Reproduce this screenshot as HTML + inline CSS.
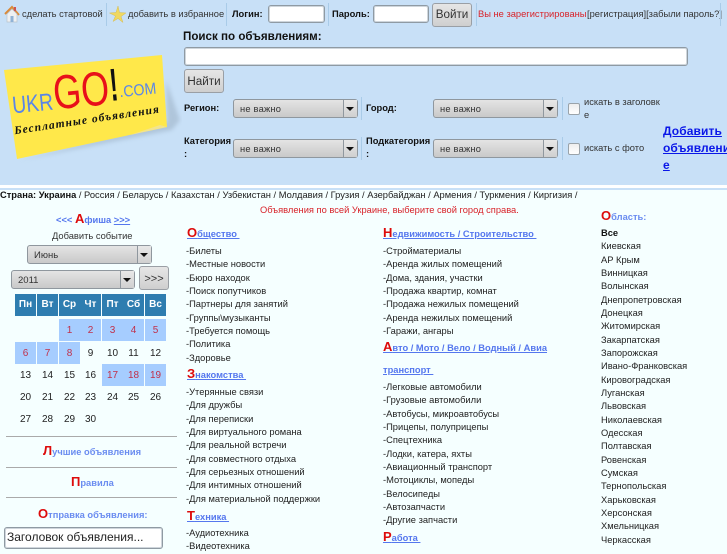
<!DOCTYPE html>
<html lang="ru"><head><meta charset="utf-8"><title>ukrGO</title>
<style>
html,body{margin:0;padding:0}
body{width:727px;height:545px;overflow:hidden;position:relative;background:#f5ffff;font:9.33px/13.33px "Liberation Sans","DejaVu Sans",sans-serif;color:#222}
.a{position:absolute;white-space:nowrap}
#top{position:absolute;left:0;top:0;width:727px;height:185px;background:#c8e0f7}
#l1{position:absolute;left:0;top:185px;width:727px;height:3px;background:#fff}
#l2{position:absolute;left:0;top:188px;width:727px;height:2px;background:#c8e0f7}
.sep{position:absolute;width:1px;background:#a9cbe8}
.inp{position:absolute;box-sizing:border-box;background:#fff;border:1px solid #8f9aa3;border-radius:3px;box-shadow:inset 0 0 0 1px #cfd6dc}
.btn{position:absolute;box-sizing:border-box;background:linear-gradient(#e6e6e6,#cfcfcf);border:1px solid #9a9fa5;border-radius:3px;text-align:center;color:#333;font-size:11.67px}
.sel{position:absolute;box-sizing:border-box;height:19px;background:linear-gradient(#e4e4e4,#c9c9c9);border:1px solid #8f979e;border-radius:3px;color:#333;font-size:9.33px;line-height:19px;padding-left:6px;letter-spacing:.2px}
.sel:after{content:"";position:absolute;right:0;top:0;width:13px;height:17px;background:linear-gradient(#e8e8e8,#d0d0d0);border-left:1px solid #8f979e}
.sel:before{content:"";position:absolute;z-index:1;right:3px;top:7px;border:4px solid transparent;border-top:4px solid #111;border-bottom:0}
.chk{position:absolute;box-sizing:border-box;width:12px;height:12px;background:linear-gradient(#eee,#fff);border:1px solid #9aa3aa;border-radius:2px}
b.h{color:#111;font-size:9.33px}
.cat{position:absolute;white-space:nowrap;line-height:13.33px;color:#222}
.t{position:absolute;white-space:nowrap;font-weight:bold;font-size:9.33px;color:#5577ee;text-decoration:underline;line-height:14px}
.t i,.c i{font-style:normal;color:#dd0b0b;font-size:13px;font-weight:bold}
.c{position:absolute;white-space:nowrap;text-align:center;font-weight:bold;color:#6a8cf0;font-size:9.33px}
.d{position:absolute;width:21px;height:22px;line-height:23px;text-align:center;font-size:10px;color:#222}
.d.on{background:#a6cdff;color:#c0304a}
.d.w{background:#2e7db0;color:#fff;font-weight:bold;line-height:22px}
.hr{position:absolute;left:6px;width:171px;height:1px;background:#aaa}
</style></head><body>
<div id="top"></div><div id="l1"></div><div id="l2"></div>

<svg class="a" style="left:2px;top:4px" width="20" height="20" viewBox="0 0 20 20"><path d="M3 10L10 3l7 8" fill="none" stroke="#d98a3a" stroke-width="2"/><path d="M5 10l5-5 5 5v8H5z" fill="#eef0f2" stroke="#b9c2cc" stroke-width=".7"/><rect x="8.5" y="12" width="3" height="6" fill="#8fb2d6"/><rect x="12" y="3" width="2" height="4" fill="#c55"/></svg>
<div class="a" style="left:22px;top:8px;color:#333">сделать стартовой</div>
<div class="sep" style="left:106px;top:3px;height:23px"></div>
<svg class="a" style="left:109px;top:5px" width="17" height="19" viewBox="0 0 17 19"><path d="M9 1l1.500 6.500 6.500.5-5 3.500 2 6-5-4-5 3 2.500-5.500-6-3 6.500-.5z" fill="#f0d860" stroke="#d5bc55" stroke-width=".5"/></svg>
<div class="a" style="left:128px;top:8px;color:#333">добавить в избранное</div>
<div class="sep" style="left:226px;top:3px;height:23px"></div>
<div class="a" style="left:232px;top:8px"><b class="h">Логин:</b></div>
<div class="inp" style="left:268px;top:5px;width:57px;height:18px"></div>
<div class="sep" style="left:328px;top:3px;height:23px"></div>
<div class="a" style="left:332px;top:8px"><b class="h">Пароль:</b></div>
<div class="inp" style="left:373px;top:5px;width:56px;height:18px"></div>
<div class="btn" style="left:432px;top:3px;width:40px;height:24px;line-height:22px">Войти</div>
<div class="sep" style="left:476px;top:3px;height:23px"></div>
<div class="a" style="left:478px;top:8px;color:#d8232a">Вы не зарегистрированы</div>
<div class="a" style="left:587px;top:8px;color:#333">[регистрация][забыли пароль?]</div>
<div class="sep" style="left:720px;top:3px;height:23px"></div>

<svg class="a" style="left:0;top:50px" width="182" height="115" viewBox="0 50 182 115">
<defs><filter id="bl"><feGaussianBlur stdDeviation="2"/></filter></defs>
<path d="M20 160L172 130 180 120 166 80 167 122z" fill="#9fb4c8" opacity=".6" filter="url(#bl)"/>
<polygon points="4,70 162,55 167,127 17,159" fill="#ffe84a"/>
<polygon points="167,127 130,135 160,125" fill="#f3e48c"/>
<g transform="rotate(-5.5 90 110)">
<text x="13" y="106" font-family="Liberation Sans,sans-serif" font-size="24" fill="#5a86e8" textLength="41" lengthAdjust="spacingAndGlyphs">UKR</text>
<text x="55" y="106" font-family="Liberation Sans,sans-serif" font-size="48" fill="#e8101a" textLength="56" lengthAdjust="spacingAndGlyphs">GO</text>
<text x="112" y="103" font-family="Liberation Sans,sans-serif" font-size="46" font-weight="bold" fill="#111" textLength="8" lengthAdjust="spacingAndGlyphs">!</text>
<text x="121" y="100" font-family="Liberation Sans,sans-serif" font-size="16" fill="#5a86e8" textLength="37" lengthAdjust="spacingAndGlyphs">.COM</text>
</g>
<g transform="rotate(-8.5 90 123)">
<text x="14" y="123" font-family="Liberation Serif,serif" font-size="11.5" font-style="italic" font-weight="bold" fill="#111" textLength="146">Бесплатные объявления</text>
</g>
</svg>

<div class="a" style="left:183px;top:29px;font-size:11.6px;line-height:15px;font-weight:bold;color:#111">Поиск по объявлениям:</div>
<div class="inp" style="left:184px;top:47px;width:504px;height:19px"></div>
<div class="btn" style="left:184px;top:69px;width:40px;height:24px;line-height:23px">Найти</div>

<div class="a" style="left:184px;top:102px"><b class="h">Регион:</b></div>
<div class="sel" style="left:233px;top:99px;width:125px">не важно</div>
<div class="sep" style="left:361px;top:97px;height:23px"></div>
<div class="a" style="left:366px;top:102px"><b class="h">Город:</b></div>
<div class="sel" style="left:433px;top:99px;width:125px">не важно</div>
<div class="sep" style="left:562px;top:97px;height:23px"></div>
<div class="chk" style="left:568px;top:103px"></div>
<div class="a" style="left:584px;top:96px;color:#333;line-height:13.33px">искать в заголовк<br>е</div>

<div class="a" style="left:184px;top:135px;line-height:13.33px"><b class="h">Категория<br>:</b></div>
<div class="sel" style="left:233px;top:139px;width:125px">не важно</div>
<div class="sep" style="left:361px;top:137px;height:23px"></div>
<div class="a" style="left:366px;top:135px;line-height:13.33px"><b class="h">Подкатегория<br>:</b></div>
<div class="sel" style="left:433px;top:139px;width:125px">не важно</div>
<div class="sep" style="left:562px;top:137px;height:23px"></div>
<div class="chk" style="left:568px;top:143px"></div>
<div class="a" style="left:584px;top:142px;color:#333">искать с фото</div>
<div class="a" style="left:663px;top:123px;font-size:12px;line-height:17px;font-weight:bold;color:#0a16e8;text-decoration:underline;letter-spacing:.1px">Добавить<br>объявлени<br>е</div>

<div class="a" style="left:0;top:189px;color:#222"><b style="color:#111">Страна: Украина</b> / Россия / Беларусь / Казахстан / Узбекистан / Молдавия / Грузия / Азербайджан / Армения / Туркмения / Киргизия /</div>
<div class="a" style="left:260px;top:204px;color:#d8232a">Объявления по всей Украине, выберите свой город справа.</div>

<div class="c" style="left:56px;top:210px;line-height:17px;color:#5577ee"><span>&lt;&lt;&lt;</span> <i>А</i>фиша <u>&gt;&gt;&gt;</u></div>
<div class="a" style="left:52px;top:230px;color:#333">Добавить событие</div>
<div class="sel" style="left:27px;top:245px;width:125px;font-size:9.5px;letter-spacing:0">Июнь</div>
<div class="sel" style="left:11px;top:270px;width:124px;font-size:9.5px;letter-spacing:0">2011</div>
<div class="btn" style="left:139px;top:266px;width:30px;height:24px;line-height:24px;font-size:11px">&gt;&gt;&gt;</div>

<div class="d w" style="left:15px;top:294px">Пн</div><div class="d w" style="left:37px;top:294px">Вт</div><div class="d w" style="left:59px;top:294px">Ср</div><div class="d w" style="left:80px;top:294px">Чт</div><div class="d w" style="left:102px;top:294px">Пт</div><div class="d w" style="left:123px;top:294px">Сб</div><div class="d w" style="left:145px;top:294px">Вс</div>
<div class="d on" style="left:59px;top:319px">1</div><div class="d on" style="left:80px;top:319px">2</div><div class="d on" style="left:102px;top:319px">3</div><div class="d on" style="left:123px;top:319px">4</div><div class="d on" style="left:145px;top:319px">5</div>
<div class="d on" style="left:15px;top:342px">6</div><div class="d on" style="left:37px;top:342px">7</div><div class="d on" style="left:59px;top:342px">8</div><div class="d" style="left:80px;top:342px">9</div><div class="d" style="left:102px;top:342px">10</div><div class="d" style="left:123px;top:342px">11</div><div class="d" style="left:145px;top:342px">12</div>
<div class="d" style="left:15px;top:364px">13</div><div class="d" style="left:37px;top:364px">14</div><div class="d" style="left:59px;top:364px">15</div><div class="d" style="left:80px;top:364px">16</div><div class="d on" style="left:102px;top:364px">17</div><div class="d on" style="left:123px;top:364px">18</div><div class="d on" style="left:145px;top:364px">19</div>
<div class="d" style="left:15px;top:386px">20</div><div class="d" style="left:37px;top:386px">21</div><div class="d" style="left:59px;top:386px">22</div><div class="d" style="left:80px;top:386px">23</div><div class="d" style="left:102px;top:386px">24</div><div class="d" style="left:123px;top:386px">25</div><div class="d" style="left:145px;top:386px">26</div>
<div class="d" style="left:15px;top:408px">27</div><div class="d" style="left:37px;top:408px">28</div><div class="d" style="left:59px;top:408px">29</div><div class="d" style="left:80px;top:408px">30</div>

<div class="hr" style="top:436px"></div>
<div class="c" style="left:43px;top:443px;line-height:15px"><i>Л</i>учшие объявления</div>
<div class="hr" style="top:467px"></div>
<div class="c" style="left:71px;top:474px;line-height:15px"><i>П</i>равила</div>
<div class="hr" style="top:497px"></div>
<div class="c" style="left:38px;top:506px;line-height:15px"><i>О</i>тправка объявления:</div>
<div class="inp" style="left:4px;top:527px;width:159px;height:22px;font-size:12px;line-height:19px;padding-left:2px;color:#222;white-space:nowrap">Заголовок объявления...</div>

<div class="t" style="left:187px;top:226px"><i>О</i>бщество&nbsp;</div>
<div class="cat" style="left:186px;top:245px">-Билеты<br>-Местные новости<br>-Бюро находок<br>-Поиск попутчиков<br>-Партнеры для занятий<br>-Группы\музыканты<br>-Требуется помощь<br>-Политика<br>-Здоровье</div>
<div class="t" style="left:187px;top:367px"><i>З</i>накомства&nbsp;</div>
<div class="cat" style="left:186px;top:386px">-Утерянные связи<br>-Для дружбы<br>-Для переписки<br>-Для виртуального романа<br>-Для реальной встречи<br>-Для совместного отдыха<br>-Для серьезных отношений<br>-Для интимных отношений<br>-Для материальной поддержки</div>
<div class="t" style="left:187px;top:509px"><i>Т</i>ехника&nbsp;</div>
<div class="cat" style="left:186px;top:527px">-Аудиотехника<br>-Видеотехника</div>

<div class="t" style="left:383px;top:226px"><i>Н</i>едвижимость / Строительство&nbsp;</div>
<div class="cat" style="left:383px;top:245px">-Стройматериалы<br>-Аренда жилых помещений<br>-Дома, здания, участки<br>-Продажа квартир, комнат<br>-Продажа нежилых помещений<br>-Аренда нежилых помещений<br>-Гаражи, ангары</div>
<div class="t" style="left:383px;top:340px"><i>А</i>вто / Мото / Вело / Водный / Авиа</div>
<div class="t" style="left:383px;top:363px">транспорт&nbsp;</div>
<div class="cat" style="left:383px;top:381px">-Легковые автомобили<br>-Грузовые автомобили<br>-Автобусы, микроавтобусы<br>-Прицепы, полуприцепы<br>-Спецтехника<br>-Лодки, катера, яхты<br>-Авиационный транспорт<br>-Мотоциклы, мопеды<br>-Велосипеды<br>-Автозапчасти<br>-Другие запчасти</div>
<div class="t" style="left:383px;top:530px"><i>Р</i>абота&nbsp;</div>

<div class="c" style="left:601px;top:208px;line-height:15px"><i>О</i>бласть:</div>
<div class="cat" style="left:601px;top:227px"><b style="color:#111">Все</b><br>Киевская<br>АР Крым<br>Винницкая<br>Волынская<br>Днепропетровская<br>Донецкая<br>Житомирская<br>Закарпатская<br>Запорожская<br>Ивано-Франковская<br>Кировоградская<br>Луганская<br>Львовская<br>Николаевская<br>Одесская<br>Полтавская<br>Ровенская<br>Сумская<br>Тернопольская<br>Харьковская<br>Херсонская<br>Хмельницкая<br>Черкасская</div>
</body></html>
